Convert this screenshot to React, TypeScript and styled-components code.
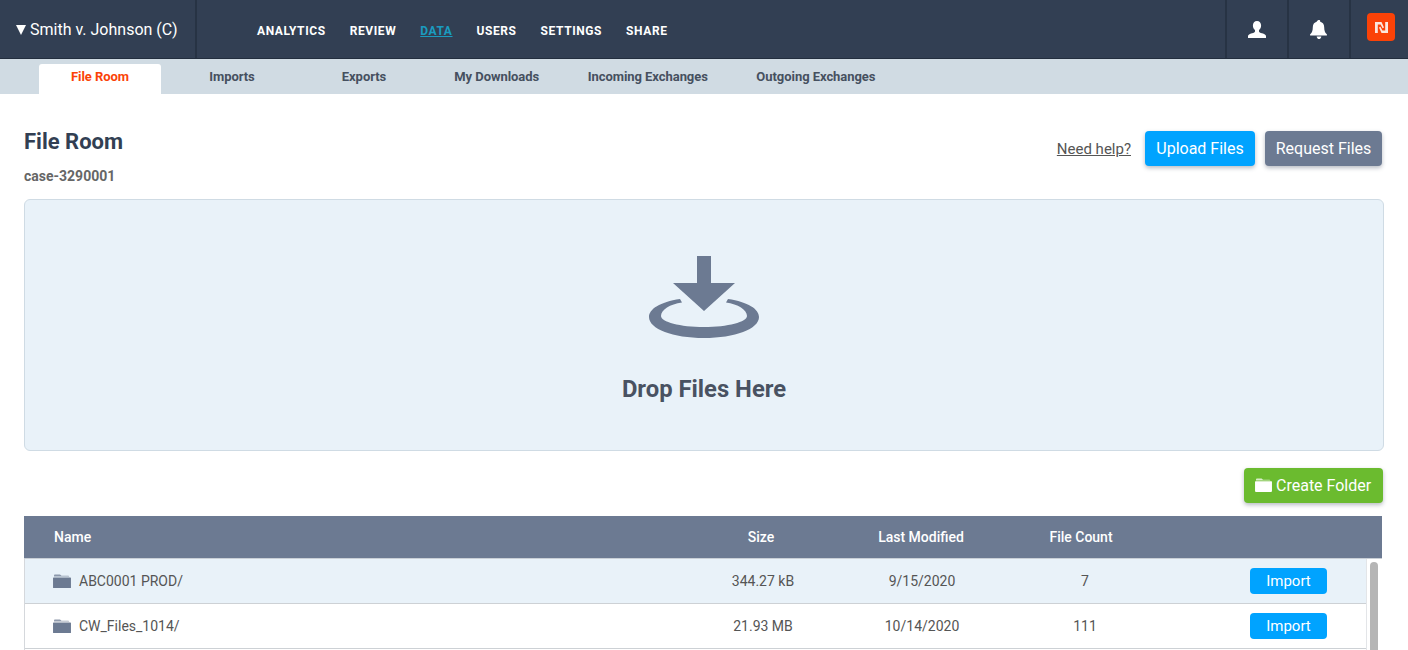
import React from 'react';
import styled, { createGlobalStyle } from 'styled-components';

const GlobalStyle = createGlobalStyle`
  html, body {
    margin: 0;
    padding: 0;
    height: 650px;
    overflow: hidden;
    background: #fff;
    font-family: Roboto, "Liberation Sans", sans-serif;
    -webkit-font-smoothing: antialiased;
  }
  * { box-sizing: border-box; }
`;

const navItems = ['ANALYTICS', 'REVIEW', 'DATA', 'USERS', 'SETTINGS', 'SHARE'];
const tabs = ['File Room', 'Imports', 'Exports', 'My Downloads', 'Incoming Exchanges', 'Outgoing Exchanges'];
const folders = [
  { name: 'ABC0001 PROD/', size: '344.27 kB', modified: '9/15/2020', count: '7' },
  { name: 'CW_Files_1014/', size: '21.93 MB', modified: '10/14/2020', count: '111' },
];

const FolderIcon = ({ size = 18 }: { size?: number }) => (
  <svg width={size} height={size * 0.83} viewBox="0 0 18 15" fill="currentColor">
    <path d="M2 .5h5l1.500 1.300h6.800c.5 0 .9.3 1 .8H1V1.500C1 .9 1.400.5 2 .5z" opacity=".75" />
    <path d="M.6 3.500h16.800c.3 0 .6.3.6.6v9.400c0 .8-.6 1.400-1.300 1.400H1.300C.6 14.900 0 14.300 0 13.500V4.100c0-.3.3-.6.6-.6z" />
  </svg>
);

export default function App() {
  return (
    <Page>
      <GlobalStyle />
      <TopBar>
        <CaseName>
          <Caret viewBox="0 0 10 11"><path d="M0 1h10L5 11z" /></Caret>
          Smith v. Johnson (C)
        </CaseName>
        <MainNav>
          {navItems.map((item) => (
            <NavLink key={item} $active={item === 'DATA'}>{item}</NavLink>
          ))}
        </MainNav>
        <IconCell>
          <svg width="18" height="17" viewBox="0 0 18 17" fill="#fff">
            <path d="M9 0c2.500 0 4.100 1.900 4.100 4.500 0 2-.9 3.700-2.100 4.600v1.300c0 .8 1.300 1.300 3 1.800 2.400.7 4 1.500 4 2.900V17H0v-1.900c0-1.400 1.600-2.200 4-2.900 1.700-.5 3-1 3-1.800V9.100C5.800 8.200 4.900 6.500 4.900 4.500 4.900 1.900 6.500 0 9 0z" />
          </svg>
        </IconCell>
        <IconCell>
          <svg width="18" height="19" viewBox="0 0 18 19" fill="#fff">
            <path d="M9 0c.7 0 1.200.5 1.200 1.100v.7c2.500.5 4 2.500 4 5.400 0 3.300.8 5.400 2.100 6.600.4.400.7.700.7 1.100 0 .4-.3.700-.8.700H.8c-.5 0-.8-.3-.8-.7 0-.4.300-.7.700-1.100C2 12.600 2.800 10.500 2.800 7.200c0-2.900 1.500-4.900 4-5.400v-.7C7.800.5 8.300 0 9 0z" />
            <path d="M6.700 16.400h4.600C11.200 17.900 10.200 19 9 19s-2.200-1.100-2.300-2.600z" />
          </svg>
        </IconCell>
        <LogoCell>
          <LogoBadge>
            <svg width="13" height="11" viewBox="0 0 13 11" fill="#fbe6dc">
              <path d="M0 0h6.500L9 5.500 7.600 6.300 5.600 2.600H2.800V11H0z" />
              <path d="M13 11H6.500L4 5.500l1.400-.8 2 3.700h2.800V0H13z" />
            </svg>
          </LogoBadge>
        </LogoCell>
      </TopBar>

      <SubNav>
        {tabs.map((tab, i) => (
          <Tab key={tab} $active={i === 0}>{tab}</Tab>
        ))}
      </SubNav>

      <Content>
        <HeaderRow>
          <div>
            <Title>File Room</Title>
            <CaseId>case-3290001</CaseId>
          </div>
          <Actions>
            <HelpLink>Need help?</HelpLink>
            <ActionButton $color="#00a3ff" $width={110}>Upload Files</ActionButton>
            <ActionButton $color="#6c7a92" $width={117}>Request Files</ActionButton>
          </Actions>
        </HeaderRow>

        <DropZone>
          <svg width="112" height="84" viewBox="0 0 112 84" fill="#6c7a92">
            <path d="M49 0h14v27h24L56 55 25 27h24z" />
            <path d="M32 43C12 46 1 53 1 61c0 12 24 21 55 21s55-9 55-21c0-8-11-15-31-18l-2 3.500C90 48 99 54 99 60c0 6-19 11-43 11S13 66 13 60c0-6 9-12 21-13.500z" />
          </svg>
          <DropText>Drop Files Here</DropText>
        </DropZone>

        <ToolRow>
          <CreateButton><FolderIcon size={17} />Create Folder</CreateButton>
        </ToolRow>

        <Table>
          <HeadRow>
            <NameCell>Name</NameCell>
            <SizeCell>Size</SizeCell>
            <DateCell>Last Modified</DateCell>
            <CountCell>File Count</CountCell>
          </HeadRow>
          <Body>
            <Rows>
              {folders.map((f, i) => (
                <Row key={f.name} $shaded={i === 0}>
                  <RowName>
                    <FolderGlyph><FolderIcon /></FolderGlyph>
                    {f.name}
                  </RowName>
                  <RowSize>{f.size}</RowSize>
                  <DateCell>{f.modified}</DateCell>
                  <RowCount>{f.count}</RowCount>
                  <ImportCell><ImportButton>Import</ImportButton></ImportCell>
                </Row>
              ))}
            </Rows>
            <ScrollTrack><ScrollThumb /></ScrollTrack>
          </Body>
        </Table>
      </Content>
    </Page>
  );
}

const Page = styled.div`
  width: 1408px;
  height: 650px;
  overflow: hidden;
`;

const TopBar = styled.header`
  display: flex;
  height: 59px;
  background: #323f53;
  border-bottom: 1px solid #232e3e;
`;

const CaseName = styled.div`
  width: 197px;
  display: flex;
  align-items: center;
  padding-left: 16px;
  color: #fff;
  font-size: 16px;
  border-right: 2px solid #273344;
`;

const Caret = styled.svg`
  width: 10px;
  height: 11px;
  margin-right: 4px;
  fill: #fff;
`;

const MainNav = styled.nav`
  flex: 1;
  display: flex;
  align-items: center;
  gap: 24px;
  padding: 3px 0 0 60px;
`;

const NavLink = styled.a<{ $active?: boolean }>`
  font-size: 12px;
  font-weight: 700;
  letter-spacing: 0.59px;
  color: ${(p) => (p.$active ? '#1a9cc0' : '#fff')};
  text-decoration: ${(p) => (p.$active ? 'underline' : 'none')};
`;

const IconCell = styled.div`
  width: 62px;
  display: flex;
  align-items: center;
  justify-content: center;
  border-left: 2px solid #273344;
`;

const LogoCell = styled.div`
  width: 59px;
  padding: 13px 0 0 16px;
  border-left: 2px solid #273344;
`;

const LogoBadge = styled.div`
  width: 28px;
  height: 28px;
  border-radius: 4px;
  background: #fb4207;
  display: flex;
  align-items: center;
  justify-content: center;
`;

const SubNav = styled.div`
  display: flex;
  height: 35px;
  padding: 5px 0 0 39px;
  background: #d0dbe3;
`;

const Tab = styled.a<{ $active?: boolean }>`
  min-width: ${(p) => (p.$active ? '122px' : '132px')};
  margin-right: ${(p) => (p.$active ? '5px' : '0')};
  padding: 0 24.25px 6px;
  display: flex;
  align-items: center;
  justify-content: center;
  font-size: 13px;
  font-weight: 700;
  letter-spacing: -0.05px;
  border-radius: 3px 3px 0 0;
  background: ${(p) => (p.$active ? '#fff' : 'transparent')};
  color: ${(p) => (p.$active ? '#fb4207' : '#46505f')};
`;

const Content = styled.main`
  padding: 0 24px;
`;

const HeaderRow = styled.div`
  display: flex;
  justify-content: space-between;
  height: 105px;
  padding-top: 35px;
`;

const Title = styled.h1`
  margin: 0;
  font-size: 22px;
  line-height: 26px;
  font-weight: 700;
  color: #323f53;
`;

const CaseId = styled.div`
  margin-top: 13px;
  font-size: 14px;
  line-height: 16px;
  font-weight: 700;
  color: #666;
`;

const Actions = styled.div`
  display: flex;
  align-items: flex-start;
  gap: 10px;
  margin: 2px 2px 0 0;
`;

const HelpLink = styled.a`
  margin: 9px 4px 0 0;
  font-size: 15px;
  color: #555;
  text-decoration: underline;
`;

const ActionButton = styled.button<{ $color: string; $width: number }>`
  width: ${(p) => p.$width}px;
  height: 35px;
  padding: 0;
  border: 0;
  border-radius: 4px;
  background: ${(p) => p.$color};
  color: #fff;
  font-family: inherit;
  font-size: 16px;
  box-shadow: 0 2px 4px rgba(50, 63, 83, 0.35);
`;

const DropZone = styled.section`
  height: 252px;
  display: flex;
  flex-direction: column;
  align-items: center;
  padding-top: 56px;
  background: #e9f2f9;
  border: 1px solid #cfdbe4;
  border-radius: 6px;
`;

const DropText = styled.div`
  margin-top: 35px;
  font-size: 23.8px;
  line-height: 28px;
  font-weight: 700;
  color: #495262;
`;

const ToolRow = styled.div`
  display: flex;
  justify-content: flex-end;
  margin: 17px 1px 13px 0;
`;

const CreateButton = styled.button`
  width: 139px;
  height: 35px;
  padding: 0 0 0 11px;
  display: flex;
  align-items: center;
  gap: 4px;
  border: 0;
  border-radius: 4px;
  background: #6bbb2f;
  color: #fff;
  font-family: inherit;
  font-size: 16px;
  box-shadow: 0 2px 4px rgba(50, 63, 83, 0.35);
`;

const Table = styled.div`
  width: 1358px;
`;

const HeadRow = styled.div`
  display: flex;
  align-items: center;
  height: 43px;
  background: #6c7a92;
  border-bottom: 1px solid #c9cfd6;
  color: #fff;
  font-size: 14px;
  font-weight: 500;
`;

const Body = styled.div`
  display: flex;
  border-left: 1px solid #d5d8dc;
`;

const Rows = styled.div`
  flex: 1;
`;

const Row = styled.div<{ $shaded?: boolean }>`
  display: flex;
  align-items: center;
  height: 45px;
  background: ${(p) => (p.$shaded ? '#e9f2f9' : '#fff')};
  border-bottom: 1px solid #cdd1d5;
  color: #555;
  font-size: 14px;
`;

const NameCell = styled.div`
  width: 645px;
  padding-left: 30px;
  display: flex;
  align-items: center;
`;

const RowName = styled(NameCell)`
  padding-left: 28px;
`;

const FolderGlyph = styled.span`
  display: flex;
  margin-right: 8px;
  color: #6c7a92;
`;

const SizeCell = styled.div`
  width: 184px;
  text-align: center;
`;

const RowSize = styled(SizeCell)`
  padding-left: 2px;
`;

const DateCell = styled.div`
  width: 136px;
  text-align: center;
`;

const CountCell = styled.div`
  width: 192px;
  padding-right: 8px;
  text-align: center;
`;

const RowCount = styled(CountCell)`
  padding-right: 2px;
`;

const ImportCell = styled.div`
  flex: 1;
  display: flex;
  justify-content: flex-end;
  padding-right: 39px;
`;

const ImportButton = styled.button`
  width: 77px;
  height: 26px;
  border: 0;
  border-radius: 4px;
  background: #00a3ff;
  color: #fff;
  font-family: inherit;
  font-size: 15px;
`;

const ScrollTrack = styled.div`
  width: 16px;
  padding: 3px 0 0 3px;
  border-left: 1px solid #e3e5e8;
`;

const ScrollThumb = styled.div`
  width: 8px;
  height: 120px;
  border-radius: 4px;
  background: #b5b5b5;
`;
